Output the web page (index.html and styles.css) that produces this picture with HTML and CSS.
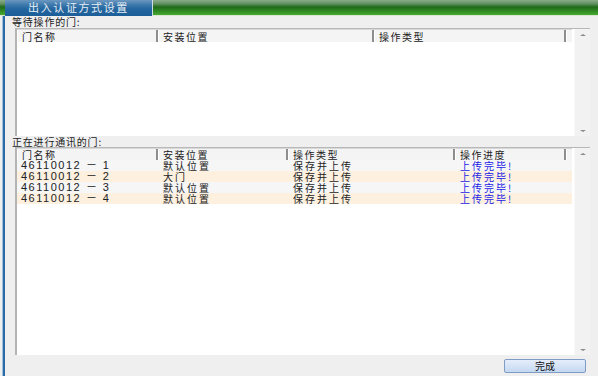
FILE: index.html
```html
<!DOCTYPE html>
<html lang="zh-CN">
<head>
    <meta charset="UTF-8">
    <title>出入认证方式设置</title>
    <link rel="stylesheet" href="styles.css">
</head>
<body>
    <!-- Title strip -->
    <div class="titlebar">
        <div class="tab">出入认证方式设置</div>
        <div class="bar"></div>
    </div>

    <div class="main">
        <div class="label">等待操作的门:</div>
        <div class="list list-wait">
            <div class="grid">
                <div class="head">
                    <div class="cell c-name">门名称</div>
                    <div class="cell c-place-w">安装位置</div>
                    <div class="cell c-type-w">操作类型</div>
                    <div class="cell filler"></div>
                </div>
            </div>
            <div class="scroll"><span class="up"></span><span class="down"></span></div>
        </div>

        <div class="label label-busy">正在进行通讯的门:</div>
        <div class="list list-busy">
            <div class="grid">
                <div class="head">
                    <div class="cell c-name">门名称</div>
                    <div class="cell c-place">安装位置</div>
                    <div class="cell c-type">操作类型</div>
                    <div class="cell c-prog">操作进度</div>
                    <div class="cell filler"></div>
                </div>
                <div class="row">
                    <div class="cell c-name num">46110012 － 1</div>
                    <div class="cell c-place">默认位置</div>
                    <div class="cell c-type">保存并上传</div>
                    <div class="cell c-prog done">上传完毕!</div>
                </div>
                <div class="row alt">
                    <div class="cell c-name num">46110012 － 2</div>
                    <div class="cell c-place">大门</div>
                    <div class="cell c-type">保存并上传</div>
                    <div class="cell c-prog done">上传完毕!</div>
                </div>
                <div class="row">
                    <div class="cell c-name num">46110012 － 3</div>
                    <div class="cell c-place">默认位置</div>
                    <div class="cell c-type">保存并上传</div>
                    <div class="cell c-prog done">上传完毕!</div>
                </div>
                <div class="row alt">
                    <div class="cell c-name num">46110012 － 4</div>
                    <div class="cell c-place">默认位置</div>
                    <div class="cell c-type">保存并上传</div>
                    <div class="cell c-prog done">上传完毕!</div>
                </div>
            </div>
            <div class="scroll"><span class="up"></span><span class="down"></span></div>
        </div>

        <div class="actions">
            <button class="btn">完成</button>
        </div>
    </div>
</body>
</html>
```

FILE: styles.css
```css
body {
    margin: 0;
    width: 598px;
    height: 376px;
    overflow: hidden;
    background-color: #efefef;
    font-family: "Noto Sans CJK SC", "Liberation Sans", sans-serif;
    font-size: 10px;
    color: #222;
    display: flex;
    flex-direction: column;
}

/* Title strip */
.titlebar {
    display: flex;
    height: 16px;
    background: linear-gradient(#8aae8a 0, #5e8e5e 4px, #1f6a1a 7px, #2f8a22 11px, #49a834 15px, #d8e8d0 15px);
}

.tab {
    width: 147px;
    margin-left: 5px;
    height: 16px;
    line-height: 15px;
    text-align: center;
    font-size: 11px;
    letter-spacing: 1.6px;
    color: #e6edf3;
    background: linear-gradient(#6c98c0 0, #3c78ac 5px, #2466a0 9px, #1c5e98 16px);
    border-right: 1px solid #cfdde8;
}

.bar {
    flex: 1;
}

/* Content area with the blue edge on the left */
.main {
    flex: 1;
    display: flex;
    flex-direction: column;
    margin-left: 3px;
    border-left: 2px solid #2a6aa6;
    box-shadow: -1px 0 0 #9fc0dc;
    padding-left: 10px;
    padding-right: 8px;
}

.label {
    height: 12px;
    line-height: 12px;
    margin-left: -3px;
    letter-spacing: 0.8px;
}

.label-busy {
    height: 11px;
    line-height: 11px;
}

.list {
    display: flex;
    background-color: #fff;
    border-left: 2px solid #b4b4b4;
    border-top: 1px solid #b8b8b8;
}

.list-wait {
    height: 107px;
}

.list-busy {
    height: 207px;
}

.grid {
    flex: 1;
    padding-right: 2px;
}

.head, .row {
    display: flex;
}

.head {
    height: 13px;
    line-height: 13px;
    box-sizing: border-box;
    background-color: #f4f4f4;
    border-top: 1px solid #d8d8d8;
    letter-spacing: 1.5px;
}

.list-busy .head {
    height: 12px;
    line-height: 11px;
}

.head .cell {
    border-right: 2px solid #8e8e8e;
    box-shadow: inset 1px 0 0 #fff;
}

.head .filler {
    flex: 1;
    border-right: none;
}

.cell {
    box-sizing: border-box;
    padding-left: 5px;
    white-space: nowrap;
}

.c-name { width: 141px; }
.c-place-w { width: 216px; }
.c-type-w { width: 192px; }
.c-place { width: 130px; }
.c-type { width: 167px; }
.c-prog { width: 111px; }

.row {
    height: 11px;
    line-height: 11px;
    background-color: #f6f6f6;
    letter-spacing: 2px;
}

.row.alt {
    background-color: #fdf0df;
}

.row .c-name {
    padding-left: 4px;
}

.num {
    font-family: "Liberation Sans", sans-serif;
    font-size: 11px;
    letter-spacing: 1.5px;
}

.done {
    color: #1a1ae6;
}

/* Scroll bar column */
.scroll {
    width: 15px;
    background-color: #f2f2f2;
    border-left: 1px solid #fafafa;
    display: flex;
    flex-direction: column;
    align-items: center;
    justify-content: space-between;
    padding: 5px 0 4px;
}

.up, .down {
    width: 0;
    height: 0;
    border-left: 3px solid transparent;
    border-right: 3px solid transparent;
}

.up {
    border-bottom: 2px solid #8a8a8a;
}

.down {
    border-top: 2px solid #8a8a8a;
}

.actions {
    display: flex;
    justify-content: flex-end;
    padding-top: 4px;
    padding-right: 4px;
}

.btn {
    width: 82px;
    height: 14px;
    padding: 0;
    font-family: "Noto Sans CJK SC", sans-serif;
    font-size: 10px;
    line-height: 12px;
    color: #111;
    background: linear-gradient(#e6eefa, #c4d8f2);
    border: 1px solid #7f9dc4;
    border-radius: 2px;
}
```
